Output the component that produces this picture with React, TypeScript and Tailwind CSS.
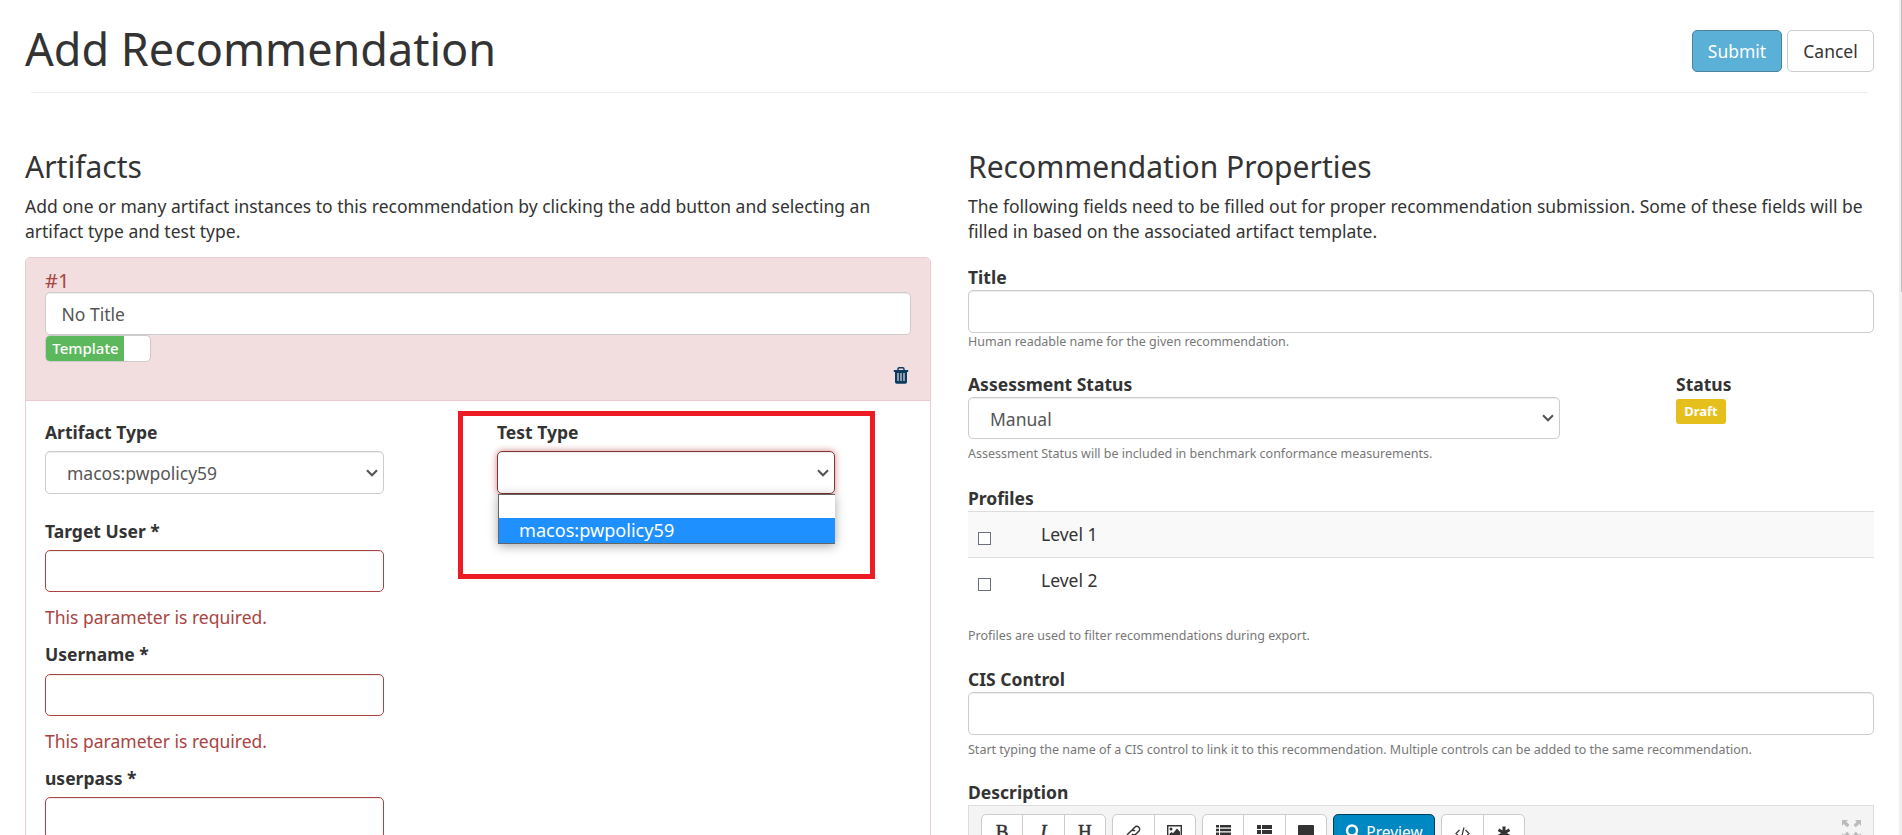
import type { ReactNode } from "react";

const field =
  "block rounded-[5px] border border-[#ccc] bg-white shadow-[inset_0_1px_1px_rgba(0,0,0,0.075)] outline-none";
const errorField =
  "block w-full rounded-[5px] border border-[#a94442] bg-white shadow-[inset_0_1px_1px_rgba(0,0,0,0.075)] outline-none";

function Chevron() {
  return (
    <svg width="12" height="8" viewBox="0 0 12 8" fill="none" stroke="#555" strokeWidth="2.1">
      <path d="M1 1.2 6 6.2l5-5" />
    </svg>
  );
}

function SelectBox({ value, className }: { value: string; className: string }) {
  return (
    <div className={`flex items-center justify-between pl-[21px] pr-[5px] text-[#555] ${className}`}>
      <span className="pt-[2px]">{value}</span>
      <Chevron />
    </div>
  );
}

function Label({ children }: { children: ReactNode }) {
  return <label className="block h-[25px] font-bold">{children}</label>;
}

function Help({ className, children }: { className: string; children: ReactNode }) {
  return <p className={`h-[18px] text-[12.5px] leading-[17px] text-[#777] ${className}`}>{children}</p>;
}

function TrashIcon() {
  return (
    <svg width="16" height="17" viewBox="0 0 16 17" fill="none">
      <path d="M5 3.2V2q0-1.2 1.2-1.2h3.6Q11 .8 11 2v1.2" stroke="#0b3c5d" strokeWidth="1.4" />
      <path d="M.8 3h14.4v2H.8z" fill="#0b3c5d" />
      <path d="M2 5h12v10q0 1.7-1.7 1.7H3.7Q2 16.700 2 15z" fill="#0b3c5d" />
      <path d="M5 6v8M8 6v8M11 6v8" stroke="#e3dbe0" strokeWidth="1.2" />
    </svg>
  );
}

function LinkIcon() {
  return (
    <svg width="15" height="15" viewBox="0 0 15 15" fill="none" stroke="#333" strokeWidth="1.5">
      <path d="m6 5 2.800-2.800a2.800 2.800 0 0 1 4 4L10 9a2.800 2.800 0 0 1-4 0" />
      <path d="m9 10-2.800 2.800a2.800 2.800 0 0 1-4-4L5 6a2.800 2.800 0 0 1 4 0" />
    </svg>
  );
}

function PictureIcon() {
  return (
    <svg width="15" height="13" viewBox="0 0 15 13" fill="#333">
      <path d="M0 0h15v13H0zm1.400 1.400v10.200h12.200V1.400z" fillRule="evenodd" />
      <circle cx="4" cy="4" r="1.500" />
      <path d="M2.300 11V9l2.200-2 1.500 1.300L10 3.500l3 3.200V11z" />
    </svg>
  );
}

function BulletListIcon() {
  return (
    <svg width="15" height="14" viewBox="0 0 15 14" fill="#333">
      <path d="M0 0h3v2.400H0zM4 0h11v2.400H4zM0 3.800h3v2.400H0zM4 3.800h11v2.400H4zM0 7.600h3V10H0zM4 7.600h11V10H4zM0 11.400h3v2.400H0zM4 11.400h11v2.400H4z" />
    </svg>
  );
}

function ThListIcon() {
  return (
    <svg width="15" height="14" viewBox="0 0 15 14" fill="#333">
      <path d="M0 0h4v4H0zM5 0h10v4H5zM0 5h4v4H0zM5 5h10v4H5zM0 10h4v4H0zM5 10h10v4H5z" />
    </svg>
  );
}

function CommentIcon() {
  return (
    <svg width="16" height="15" viewBox="0 0 16 15" fill="#333">
      <path d="M1 0h14q1 0 1 1v9q0 1-1 1H8l-3 4v-4H1q-1 0-1-1V1q0-1 1-1z" />
    </svg>
  );
}

function CodeIcon() {
  return (
    <svg width="15" height="13" viewBox="0 0 15 13" className="mt-[2px]" fill="none" stroke="#333" strokeWidth="1.2">
      <path d="M4.500 3 1 6.500 4.500 10M10.500 3 14 6.500 10.500 10M9 .5l-3 12" />
    </svg>
  );
}

function AsteriskIcon() {
  return (
    <svg width="14" height="14" viewBox="0 0 14 14" className="mt-[1px]" stroke="#333" strokeWidth="3">
      <path d="M7 .5v13M1.500 3.700l11 6.600M12.500 3.700l-11 6.600" />
    </svg>
  );
}

function SearchIcon() {
  return (
    <svg width="15" height="16" viewBox="0 0 15 16" fill="none" stroke="#fff">
      <circle cx="7" cy="6.500" r="5" strokeWidth="2.400" />
      <path d="m10.500 10.500 3.500 4" strokeWidth="3" />
    </svg>
  );
}

function ExpandIcon() {
  return (
    <svg width="19" height="19" viewBox="0 0 19 19" fill="#bbb">
      <path d="M0 0h6L4.400 1.700 7.500 5 5.200 7.200 1.800 4 0 6z" />
      <path d="M19 0h-6l1.600 1.700L11.500 5l2.300 2.200L17.200 4 19 6z" />
      <path d="M0 19h6l-1.600-1.700L7.500 14l-2.300-2.200L1.800 15 0 13z" />
      <path d="M19 19h-6l1.600-1.700-3.100-3.300 2.300-2.200 3.400 3.200 1.800-2z" />
    </svg>
  );
}

function ToolGroup({ items, className }: { items: ReactNode[]; className: string }) {
  return (
    <div className={`flex h-[42px] divide-x divide-[#ccc] rounded-[5px] border border-[#ccc] bg-white ${className}`}>
      {items.map((item, i) => (
        <button key={i} className="flex flex-1 justify-center pt-[10px]">
          {item}
        </button>
      ))}
    </div>
  );
}

function Glyph({ className, children }: { className: string; children: ReactNode }) {
  return (
    <span
      className={`font-['Liberation_Serif',serif] text-[19px] leading-[14px] [-webkit-text-stroke:0.5px_#333] ${className}`}
    >
      {children}
    </span>
  );
}

function ArtifactPanel() {
  return (
    <div className="mt-[13px] h-[620px] rounded-[5px] border border-[#ebccd1]">
      <div className="h-[143px] rounded-t-[4px] border-b border-[#ebccd1] bg-[#f2dede] px-[19px] pt-[11px]">
        <div className="h-[23px] text-[20px] leading-[24px] text-[#a94442]">#1</div>
        <div className={`${field} h-[43px] px-[15.5px] pt-[9px] leading-[25px] text-[#555]`}>No Title</div>
        <div className="flex h-[27px] w-[106px] overflow-hidden rounded-[5px] border border-[#ccc] bg-white">
          <span className="flex w-[78px] items-center justify-center bg-[#5cb85c] pl-[1px] text-[15px] font-medium text-white">
            Template
          </span>
        </div>
        <div className="mt-[5px] flex justify-end pr-[2px]">
          <TrashIcon />
        </div>
      </div>
      <div className="flex px-[19px] pt-[19px]">
        <div className="w-[339px]">
          <Label>Artifact Type</Label>
          <SelectBox value="macos:pwpolicy59" className={`${field} mt-[6px] h-[43px]`} />
          <div className="mt-[25px]">
            <Label>Target User *</Label>
          </div>
          <input className={`${errorField} mt-[6px] h-[42px]`} />
          <p className="mt-[13px] text-[#a94442]">This parameter is required.</p>
          <div className="mt-[12px]">
            <Label>Username *</Label>
          </div>
          <input className={`${errorField} mt-[7px] h-[42px]`} />
          <p className="mt-[13px] text-[#a94442]">This parameter is required.</p>
          <div className="mt-[12px]">
            <Label>userpass *</Label>
          </div>
          <input className={`${errorField} mt-[6px] h-[42px]`} />
        </div>
        <div className="relative ml-[113px] w-[338px]">
          <Label>Test Type</Label>
          <div className="mt-[6px] flex h-[43px] items-center justify-end rounded-[5px] border border-[#843534] pr-[5px] shadow-[inset_0_1px_1px_rgba(0,0,0,0.075),0_0_7px_#ce8483]">
            <Chevron />
          </div>
          <div className="absolute left-[1px] top-[74px] h-[50px] w-[337px] border border-r-0 border-[#666] bg-white pt-[23px] shadow-[0_2px_10px_rgba(0,0,0,0.35)]">
            <div className="h-[25px] bg-[#1e90ff] pl-[20px] text-[18.1px] leading-[25px] text-white">
              macos:pwpolicy59
            </div>
          </div>
          <div className="absolute -left-[39px] -top-[9px] h-[168px] w-[417px] border-[5px] border-[#ed1c24]" />
        </div>
      </div>
    </div>
  );
}

function ProfileRow({ name, className }: { name: string; className: string }) {
  return (
    <div className={`flex h-[46px] border-t border-[#ddd] pl-[10px] ${className}`}>
      <input
        type="checkbox"
        className="mt-[20px] h-[13px] w-[13px] appearance-none border border-[#6b7080] bg-white"
      />
      <span className="ml-[50px] mt-[10px]">{name}</span>
    </div>
  );
}

function Editor() {
  return (
    <div className="h-[200px] border border-[#ddd] bg-[#f4f4f4]">
      <div className="flex pl-[12px] pr-[12px] pt-[8px]">
        <ToolGroup
          className="w-[125px]"
          items={[
            <Glyph className="">B</Glyph>,
            <Glyph className="italic">I</Glyph>,
            <Glyph className="">H</Glyph>,
          ]}
        />
        <ToolGroup className="ml-[6px] w-[84px]" items={[<LinkIcon />, <PictureIcon />]} />
        <ToolGroup className="ml-[6px] w-[125px]" items={[<BulletListIcon />, <ThListIcon />, <CommentIcon />]} />
        <button className="ml-[6px] flex h-[42px] w-[102px] justify-center gap-[6px] rounded-[5px] border border-[#003e5e] bg-[#0088c3] pt-[9px] text-white">
          <SearchIcon />
          <span className="-mt-[4px] text-[15.5px]">Preview</span>
        </button>
        <ToolGroup className="ml-[6px] w-[84px]" items={[<CodeIcon />, <AsteriskIcon />]} />
        <div className="ml-auto pt-[6px]">
          <ExpandIcon />
        </div>
      </div>
    </div>
  );
}

function Properties() {
  return (
    <section className="w-[906px]">
      <h2 className="h-[49px] pt-[5px] text-[30px] leading-[33px]">Recommendation Properties</h2>
      <p className="h-[50px] whitespace-nowrap">
        The following fields need to be filled out for proper recommendation submission. Some of these fields will be
        <br />
        filled in based on the associated artifact template.
      </p>
      <div className="pt-[21px]">
        <Label>Title</Label>
        <input className={`${field} h-[43px] w-full`} />
        <Help className="">Human readable name for the given recommendation.</Help>
      </div>
      <div className="flex pt-[21px]">
        <div className="w-[592px]">
          <Label>Assessment Status</Label>
          <SelectBox value="Manual" className={`${field} h-[42px]`} />
        </div>
        <div className="ml-[116px]">
          <Label>Status</Label>
          <div className="mt-[2px] flex h-[25px] w-[50px] items-center justify-center rounded-[3px] bg-[#e5bf1b] text-[13px] font-bold text-white">
            Draft
          </div>
        </div>
      </div>
      <Help className="mt-[6px]">Assessment Status will be included in benchmark conformance measurements.</Help>
      <div className="pt-[23px]">
        <Label>Profiles</Label>
        <ProfileRow name="Level 1" className="bg-[#f9f9f9]" />
        <ProfileRow name="Level 2" className="" />
      </div>
      <Help className="mt-[24px]">Profiles are used to filter recommendations during export.</Help>
      <div className="pt-[22px]">
        <Label>CIS Control</Label>
        <input className={`${field} h-[43px] w-full`} />
      </div>
      <Help className="mt-[6px]">
        Start typing the name of a CIS control to link it to this recommendation. Multiple controls can be added to the
        same recommendation.
      </Help>
      <div className="pt-[21px]">
        <Label>Description</Label>
        <Editor />
      </div>
    </section>
  );
}

export default function App() {
  return (
    <div className="flex h-[835px] w-[1902px] overflow-hidden bg-white font-['Noto_Sans','Open_Sans',sans-serif] text-[17.5px] leading-[25px] text-[#333]">
      <div className="h-[1010px] w-[1899px] shrink-0 pl-[25px] pr-[25px]">
        <header className="flex h-[92px] justify-between">
          <h1 className="pt-[24px] text-[45px] leading-[50px]">Add Recommendation</h1>
          <div className="flex gap-[5px] pt-[30px]">
            <button className="h-[42px] w-[90px] rounded-[5px] border border-[#4a84a0] bg-[#5ab0d6] text-white">
              Submit
            </button>
            <button className="h-[42px] w-[87px] rounded-[5px] border border-[#ccc] bg-white">Cancel</button>
          </div>
        </header>
        <hr className="mx-[6px] border-[#eee]" />
        <main className="flex gap-[37px] pt-[52px]">
          <section className="w-[906px]">
            <h2 className="h-[49px] pt-[5px] text-[30px] leading-[33px]">Artifacts</h2>
            <p className="h-[50px] whitespace-nowrap">
              Add one or many artifact instances to this recommendation by clicking the add button and selecting an
              <br />
              artifact type and test type.
            </p>
            <ArtifactPanel />
          </section>
          <Properties />
        </main>
      </div>
      <div className="h-[835px] w-[3px] shrink-0 bg-[#f0f0f0] pl-[2px]">
        <div className="h-[292px] w-[1px] bg-[#c1c1c1]" />
      </div>
    </div>
  );
}
